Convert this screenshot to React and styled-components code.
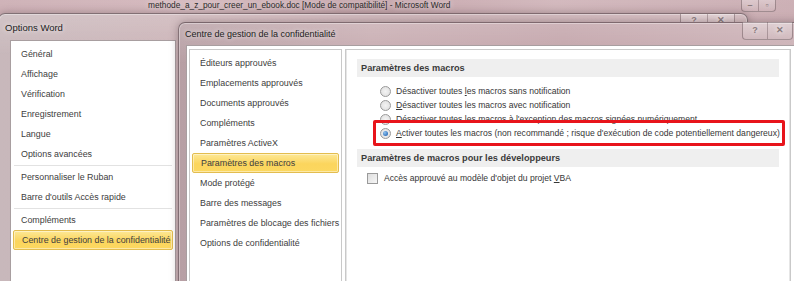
import React from 'react';
import styled, { createGlobalStyle } from 'styled-components';

const GlobalStyle = createGlobalStyle`
  html, body {
    margin: 0;
    padding: 0;
    background: #c4aab0;
  }
  body {
    font-family: "Liberation Sans", Arial, sans-serif;
    color: #3a3a3a;
  }
`;

const Desktop = styled.div`
  position: relative;
  width: 794px;
  height: 281px;
  overflow: hidden;
  background:
    linear-gradient(180deg, rgba(255, 255, 255, 0.12) 0%, rgba(255, 255, 255, 0) 30%),
    linear-gradient(90deg, #c9a9af 0%, #d0b2b7 25%, #bf9ba2 45%, #cdb0b5 70%, #c6a6ac 100%);
`;

const WordCaption = styled.div`
  display: flex;
  align-items: flex-start;
  height: 14px;
  padding-left: 148px;
  font-size: 8.3px;
  line-height: 10px;
  color: #2b2b2b;
  text-shadow: 0 0 6px rgba(255, 255, 255, 0.8);
`;

const CaptionButtons = styled.div`
  display: flex;
  margin-left: auto;
  margin-right: ${(p) => p.$right || 0}px;
  margin-top: ${(p) => p.$top || 0}px;
  align-self: flex-start;
  border: 1px solid rgba(90, 70, 75, 0.45);
  border-top: none;
  border-radius: 0 0 4px 4px;
  overflow: hidden;
  background: linear-gradient(180deg, rgba(255, 255, 255, 0.3), rgba(255, 255, 255, 0.05));
`;

const CaptionButton = styled.span`
  display: flex;
  align-items: center;
  justify-content: center;
  width: ${(p) => p.$w || 24}px;
  height: ${(p) => p.$h || 16}px;
  font-size: 9px;
  line-height: 1;
  color: #8a7b7e;
  font-weight: bold;
  & + & {
    border-left: 1px solid rgba(90, 70, 75, 0.35);
  }
`;

const Win = styled.div`
  position: absolute;
  left: ${(p) => p.$x}px;
  top: ${(p) => p.$y}px;
  width: ${(p) => p.$w}px;
  height: ${(p) => p.$h}px;
  border: 1px solid rgba(70, 55, 60, 0.55);
  border-radius: 7px 7px 0 0;
  box-shadow: 0 0 8px rgba(60, 40, 45, 0.35), inset 0 0 0 1px rgba(255, 255, 255, 0.35);
  background:
    linear-gradient(180deg, rgba(255, 255, 255, 0.18) 0%, rgba(255, 255, 255, 0) 40px),
    ${(p) => p.$frame};
  display: flex;
  flex-direction: column;
`;

const TitleBar = styled.div`
  display: flex;
  align-items: center;
  height: ${(p) => p.$h}px;
  padding-left: 6px;
  font-size: ${(p) => p.$size}px;
  color: #222;
  text-shadow: 0 0 5px rgba(255, 255, 255, 0.9);
  flex-shrink: 0;
`;

const NavPanel = styled.div`
  margin-left: 11px;
  width: 166px;
  flex: 1;
  background: #fff;
  border: 1px solid #a89ea0;
  padding-top: 3px;
  box-sizing: border-box;
`;

const NavItem = styled.div`
  height: 20px;
  line-height: 20px;
  padding-left: ${(p) => (p.$active ? 8 : 10)}px;
  margin: 0 ${(p) => (p.$active ? 2 : 0)}px;
  font-size: 8.9px;
  color: #404040;
  white-space: nowrap;
  border-radius: 2px;
  ${(p) =>
    p.$active &&
    `
    border: 1px solid #e3bd4f;
    line-height: 18px;
    height: 18px;
    background: linear-gradient(180deg, #fde896 0%, #fbd55d 55%, #fcd860 100%);
    box-shadow: inset 0 0 0 1px rgba(255,255,255,0.45);
  `}
`;

const Separator = styled.div`
  height: 1px;
  margin: 1px 3px;
  background: #e2e2e2;
`;

const Client = styled.div`
  flex: 1;
  display: flex;
  gap: 3px;
  margin-left: 7px;
  padding: 3px 0 0 2px;
  background: #fff;
  border: 1px solid #a89ea0;
`;

const ListPanel = styled.div`
  width: 153px;
  border: 1px solid #c9c9c9;
  padding-top: 3px;
  box-sizing: border-box;
`;

const SettingsPanel = styled.div`
  position: relative;
  width: 446px;
  border: 1px solid #c9c9c9;
  box-shadow: inset 1px 0 0 #e6e6e6, inset -1px 0 0 #e6e6e6;
  padding: 9px 11px 0 11px;
  box-sizing: border-box;
`;

const SectionHeader = styled.div`
  height: 18px;
  line-height: 18px;
  padding-left: 4px;
  background: #efefef;
  font-size: 9.2px;
  font-weight: bold;
  color: #3b3b3b;
  margin-top: ${(p) => p.$mt || 0}px;
`;

const Options = styled.div`
  display: flex;
  flex-direction: column;
  padding: ${(p) => p.$pad};
`;

const OptionRow = styled.label`
  display: flex;
  align-items: center;
  gap: ${(p) => p.$gap || 5}px;
  height: 14px;
  font-size: 8.6px;
  color: #363636;
  white-space: nowrap;
`;

const Radio = styled.span`
  width: 9px;
  height: 9px;
  border-radius: 50%;
  border: 1px solid #9a9a9a;
  background: radial-gradient(circle at 50% 50%, #f4f4f4 0%, #dcdcdc 100%);
  position: relative;
  flex-shrink: 0;
  &::after {
    content: '';
    display: ${(p) => (p.$checked ? 'block' : 'none')};
    position: absolute;
    left: 2px;
    top: 2px;
    width: 5px;
    height: 5px;
    border-radius: 50%;
    background: radial-gradient(circle at 35% 35%, #8fc4f0 0%, #2a6ab8 80%);
  }
`;

const Checkbox = styled.span`
  width: 9px;
  height: 9px;
  border: 1px solid #9a9a9a;
  background: linear-gradient(135deg, #dedede 0%, #f6f6f6 100%);
  flex-shrink: 0;
`;

const Key = styled.span`
  text-decoration: underline;
`;

const Highlight = styled.div`
  position: absolute;
  left: 27px;
  top: 70px;
  width: 412px;
  height: 26px;
  border: 3px solid #e8141b;
  border-radius: 2px;
  box-sizing: border-box;
`;

const navGroups = [
  ['Général', 'Affichage', 'Vérification', 'Enregistrement', 'Langue', 'Options avancées'],
  ['Personnaliser le Ruban', "Barre d'outils Accès rapide"],
  ['Compléments', 'Centre de gestion de la confidentialité'],
];

const trustItems = [
  'Éditeurs approuvés',
  'Emplacements approuvés',
  'Documents approuvés',
  'Compléments',
  'Paramètres ActiveX',
  'Paramètres des macros',
  'Mode protégé',
  'Barre des messages',
  'Paramètres de blocage des fichiers',
  'Options de confidentialité',
];

const optionsFrame = 'linear-gradient(90deg, #c8b8bb 0%, #cdb3b7 30%, #c5a8ad 60%, #cfb4b8 100%)';
const centreFrame = 'linear-gradient(90deg, #b79fa4 0%, #c7abb0 30%, #c2a3a9 60%, #cbb0b5 100%)';

export default function App() {
  return (
    <>
      <GlobalStyle />
      <Desktop>
        <WordCaption>
          methode_a_z_pour_creer_un_ebook.doc [Mode de compatibilité] - Microsoft Word
          <CaptionButtons $right={18} $top={0}>
            <CaptionButton $w={16} $h={11}>–</CaptionButton>
            <CaptionButton $w={16} $h={11}>▫</CaptionButton>
          </CaptionButtons>
        </WordCaption>

        <Win $x={-2} $y={13} $w={748} $h={290} $frame={optionsFrame}>
          <TitleBar $h={26} $size={9.5}>
            Options Word
            <CaptionButtons $right={12} $top={0}>
              <CaptionButton $w={26} $h={12}>?</CaptionButton>
              <CaptionButton $w={26} $h={12}>✕</CaptionButton>
            </CaptionButtons>
          </TitleBar>
          <NavPanel>
            {navGroups.map((group, gi) => (
              <React.Fragment key={gi}>
                {gi > 0 && <Separator />}
                {group.map((item) => (
                  <NavItem key={item} $active={item.startsWith('Centre')}>
                    {item}
                  </NavItem>
                ))}
              </React.Fragment>
            ))}
          </NavPanel>
        </Win>

        <Win $x={178} $y={22} $w={640} $h={290} $frame={centreFrame}>
          <TitleBar $h={22} $size={9}>
            Centre de gestion de la confidentialité
            <CaptionButtons $right={26} $top={-1}>
              <CaptionButton $w={24} $h={17}>?</CaptionButton>
              <CaptionButton $w={24} $h={17}>✕</CaptionButton>
            </CaptionButtons>
          </TitleBar>
          <Client>
            <ListPanel>
              {trustItems.map((item) => (
                <NavItem key={item} $active={item === 'Paramètres des macros'}>
                  {item}
                </NavItem>
              ))}
            </ListPanel>
            <SettingsPanel>
              <SectionHeader>Paramètres des macros</SectionHeader>
              <Options $pad="7px 0 0 23px">
                <OptionRow>
                  <Radio />
                  <span>
                    Désactiver toutes <Key>l</Key>es macros sans notification
                  </span>
                </OptionRow>
                <OptionRow>
                  <Radio />
                  <span>
                    <Key>D</Key>ésactiver toutes les macros avec notification
                  </span>
                </OptionRow>
                <OptionRow>
                  <Radio />
                  <span>Désactiver toutes les macros à l'exception des macros signées numériquement</span>
                </OptionRow>
                <OptionRow>
                  <Radio $checked />
                  <span>
                    <Key>A</Key>ctiver toutes les macros (non recommandé ; risque d'exécution de code
                    potentiellement dangereux)
                  </span>
                </OptionRow>
              </Options>
              <SectionHeader $mt={9}>Paramètres de macros pour les développeurs</SectionHeader>
              <Options $pad="4px 0 0 10px">
                <OptionRow $gap={6}>
                  <Checkbox />
                  <span>
                    Accès approuvé au modèle d'objet du projet <Key>V</Key>BA
                  </span>
                </OptionRow>
              </Options>
              <Highlight />
            </SettingsPanel>
          </Client>
        </Win>
      </Desktop>
    </>
  );
}
